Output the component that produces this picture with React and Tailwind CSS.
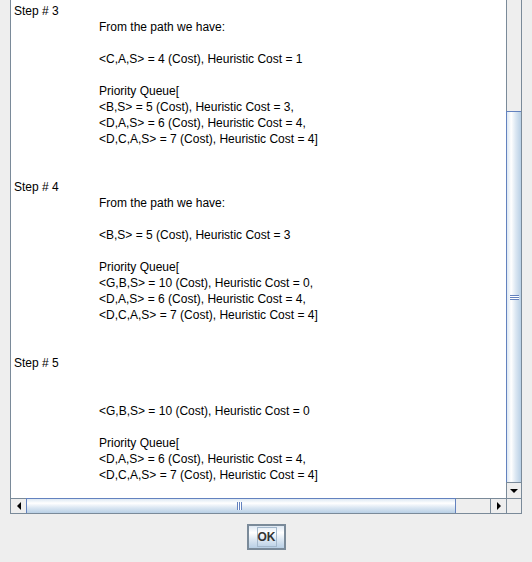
import React from "react";

const lines = [
  ["Step # 3", 0],
  ["From the path we have:", 1],
  ["", 0],
  ["<C,A,S> = 4 (Cost), Heuristic Cost = 1", 1],
  ["", 0],
  ["Priority Queue[", 1],
  ["<B,S> = 5 (Cost), Heuristic Cost = 3,", 1],
  ["<D,A,S> = 6 (Cost), Heuristic Cost = 4,", 1],
  ["<D,C,A,S> = 7 (Cost), Heuristic Cost = 4]", 1],
  ["", 0],
  ["", 0],
  ["Step # 4", 0],
  ["From the path we have:", 1],
  ["", 0],
  ["<B,S> = 5 (Cost), Heuristic Cost = 3", 1],
  ["", 0],
  ["Priority Queue[", 1],
  ["<G,B,S> = 10 (Cost), Heuristic Cost = 0,", 1],
  ["<D,A,S> = 6 (Cost), Heuristic Cost = 4,", 1],
  ["<D,C,A,S> = 7 (Cost), Heuristic Cost = 4]", 1],
  ["", 0],
  ["", 0],
  ["Step # 5", 0],
  ["", 0],
  ["", 0],
  ["<G,B,S> = 10 (Cost), Heuristic Cost = 0", 1],
  ["", 0],
  ["Priority Queue[", 1],
  ["<D,A,S> = 6 (Cost), Heuristic Cost = 4,", 1],
  ["<D,C,A,S> = 7 (Cost), Heuristic Cost = 4]", 1],
];

export default function App() {
  return (
    <div className="w-[532px] h-[562px] bg-[#eeeeee] flex flex-col overflow-hidden font-['Liberation_Sans',Arial,sans-serif]">
      {/* scroll pane */}
      <div className="ml-[10px] w-[512px] h-[514px] border-x border-b border-[#7a8a99] flex flex-col bg-white">
        <div className="flex h-[498px]">
          {/* viewport */}
          <div className="w-[495px] h-[498px] overflow-hidden bg-white pt-[3px] pl-[3px] text-[12px] leading-[16px] text-black">
            {lines.map(([t, ind], i) => (
              <div
                key={i}
                className={
                  "h-[16px] whitespace-pre " + (ind ? "pl-[85px]" : "")
                }
              >
                {t}
              </div>
            ))}
          </div>
          {/* vertical scrollbar */}
          <div className="w-[15px] h-[498px] flex flex-col">
            <div className="h-[111px] border-l border-[#7a8a99] bg-[#eeeeee]" />
            <div className="h-[371px] border-l border-t border-[#6382bf] bg-[linear-gradient(to_right,#dde8f3_0%,#ffffff_30%,#dde8f3_60%,#b8cfe5_100%)] flex items-center justify-center">
              <div className="flex flex-col w-[9px] ml-[1px]">
                <div className="h-[1px] bg-[#6382bf]" />
                <div className="h-[1px] bg-white" />
                <div className="h-[1px] bg-[#6382bf]" />
                <div className="h-[1px] bg-white" />
                <div className="h-[1px] bg-[#6382bf]" />
              </div>
            </div>
            <div className="h-[16px] border-l border-t border-[#7a8a99] bg-[#eeeeee] flex items-center justify-center">
              <svg width="8" height="4" viewBox="0 0 8 4" className="block">
                <polygon points="0,0 8,0 4,4" fill="#000" />
              </svg>
            </div>
          </div>
        </div>
        {/* horizontal scrollbar */}
        <div className="flex h-[15px]">
          <div className="w-[15px] border-t border-[#7a8a99] bg-[#eeeeee] flex items-center justify-center">
            <svg width="4" height="8" viewBox="0 0 4 8" className="block">
              <polygon points="4,0 4,8 0,4" fill="#000" />
            </svg>
          </div>
          <div className="w-[430px] border-t border-x border-[#6382bf] bg-[linear-gradient(to_bottom,#dde8f3_0%,#ffffff_30%,#dde8f3_60%,#b8cfe5_100%)] flex items-center justify-center">
            <div className="flex h-[8px] mr-[3px]">
              <div className="w-[1px] bg-[#6382bf]" />
              <div className="w-[1px] bg-white" />
              <div className="w-[1px] bg-[#6382bf]" />
              <div className="w-[1px] bg-white" />
              <div className="w-[1px] bg-[#6382bf]" />
            </div>
          </div>
          <div className="w-[34px] border-t border-[#7a8a99] bg-[#eeeeee]" />
          <div className="w-[16px] border-t border-l border-[#7a8a99] bg-[#eeeeee] flex items-center justify-center">
            <svg width="4" height="8" viewBox="0 0 4 8" className="block">
              <polygon points="0,0 0,8 4,4" fill="#000" />
            </svg>
          </div>
          <div className="w-[15px] border-t border-l border-[#7a8a99] bg-[#eeeeee]" />
        </div>
      </div>
      {/* button row */}
      <div className="flex justify-center pl-[1px] mt-[10px]">
        <div className="w-[39px] h-[26px] border-2 border-[#7a8a99] bg-[linear-gradient(to_bottom,#dde8f3_0%,#ffffff_30%,#dde8f3_60%,#b8cfe5_100%)] flex items-center justify-center">
          <div className="w-[20px] h-[20px] border border-[#a3b8cc] flex items-center justify-center text-[12px] font-bold text-[#333333] leading-none">
            OK
          </div>
        </div>
      </div>
    </div>
  );
}
